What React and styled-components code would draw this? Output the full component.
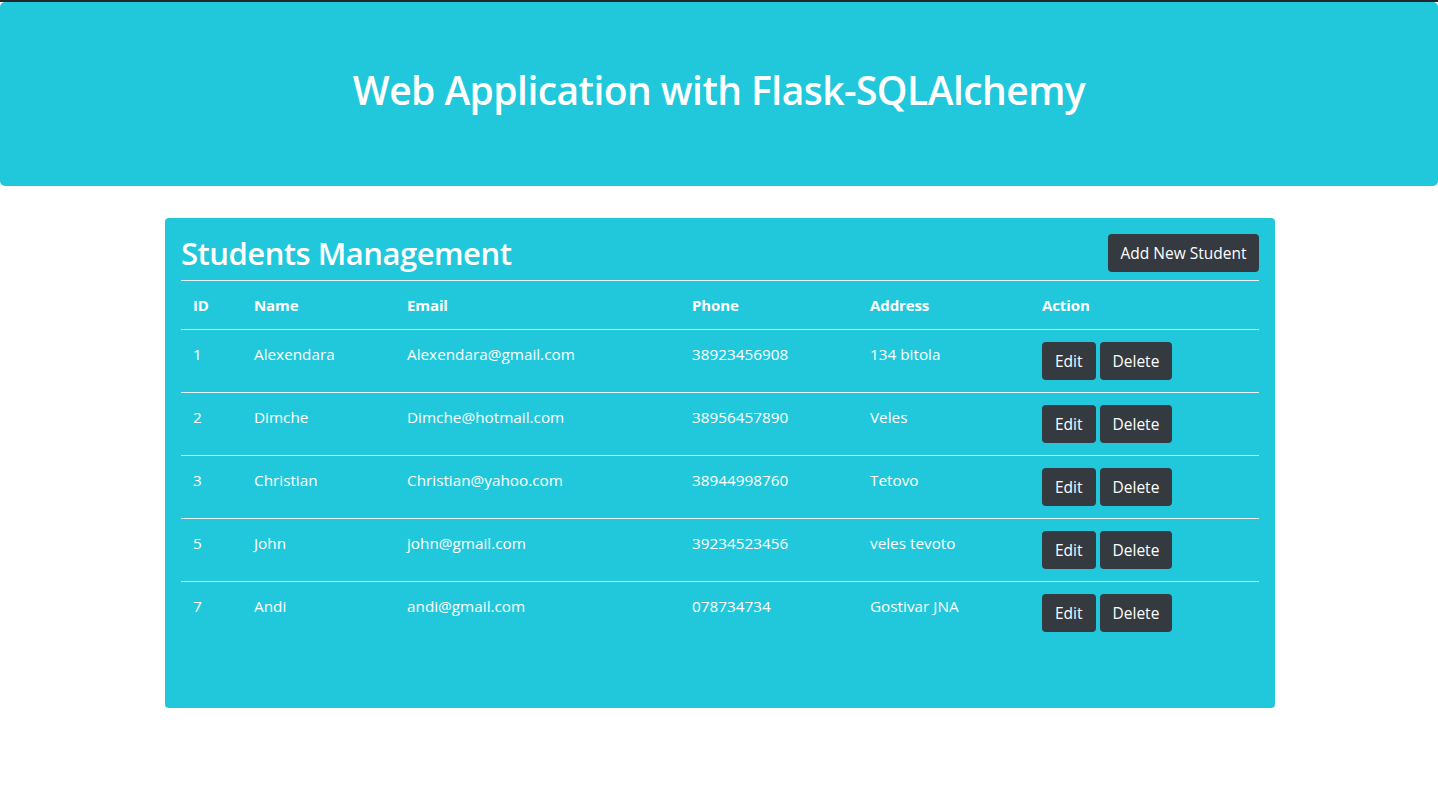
import React from 'react';
import styled, { createGlobalStyle } from 'styled-components';

const GlobalStyle = createGlobalStyle`
  * { box-sizing: border-box; }
  body {
    margin: 0;
    font-family: "Open Sans", "Noto Sans", sans-serif;
    color: #fff;
    background: #fff;
    border-top: 2px solid #22262a;
  }
`;

const Jumbotron = styled.header`
  background: #21c8dc;
  border-radius: 5px;
  padding: 64px 32px 64px;
  text-align: center;
`;

const Title = styled.h1`
  margin: 0 0 8px;
  font-size: 39px;
  font-weight: 600;
  line-height: 48px;
  letter-spacing: -0.55px;
`;

const Container = styled.main`
  width: 1110px;
  margin: 32px auto 0;
  position: relative;
  left: 1px;
`;

const Card = styled.section`
  background: #21c8dc;
  border-radius: 4px;
  padding: 16px 16px 64px;
`;

const CardHead = styled.div`
  display: flex;
  justify-content: space-between;
  align-items: flex-start;
  margin-bottom: 8px;
`;

const Heading = styled.h2`
  margin: 0;
  font-size: 31px;
  font-weight: 600;
  line-height: 38px;
  letter-spacing: -0.5px;
`;

const Button = styled.button`
  background: #343a40;
  color: #fff;
  border: none;
  border-radius: 4px;
  font-family: inherit;
  font-size: 15.5px;
  letter-spacing: 0;
  height: 38px;
  padding: 0 ${p => (p.$wide ? 12.5 : 13)}px;
  margin-right: ${p => (p.$gap ? 4 : 0)}px;
  cursor: pointer;
`;

const Table = styled.table`
  width: 100%;
  border-collapse: collapse;
  table-layout: fixed;
`;

const Th = styled.th`
  text-align: left;
  font-size: 15px;
  font-weight: 700;
  letter-spacing: -0.1px;
  padding: 12px 12px;
  line-height: 24px;
  border-top: 1px solid #e3f5f8;
  width: ${p => p.$w}px;
`;

const Td = styled.td`
  font-size: 15.3px;
  letter-spacing: 0;
  padding: 12px 12px;
  line-height: 24px;
  vertical-align: top;
  border-top: 1px solid #e3f5f8;
  white-space: nowrap;
`;

const students = [
  { id: 1, name: 'Alexendara', email: 'Alexendara@gmail.com', phone: '38923456908', address: '134 bitola' },
  { id: 2, name: 'Dimche', email: 'Dimche@hotmail.com', phone: '38956457890', address: 'Veles' },
  { id: 3, name: 'Christian', email: 'Christian@yahoo.com', phone: '38944998760', address: 'Tetovo' },
  { id: 5, name: 'John', email: 'john@gmail.com', phone: '39234523456', address: 'veles tevoto' },
  { id: 7, name: 'Andi', email: 'andi@gmail.com', phone: '078734734', address: 'Gostivar JNA' },
];

const columns = [
  ['ID', 61],
  ['Name', 153],
  ['Email', 285],
  ['Phone', 178],
  ['Address', 172],
  ['Action', 229],
];

export default function App() {
  return (
    <>
      <GlobalStyle />
      <Jumbotron>
        <Title>Web Application with Flask-SQLAlchemy</Title>
      </Jumbotron>
      <Container>
        <Card>
          <CardHead>
            <Heading>Students Management</Heading>
            <Button $wide>Add New Student</Button>
          </CardHead>
          <Table>
            <thead>
              <tr>
                {columns.map(([label, w]) => (
                  <Th key={label} $w={w}>{label}</Th>
                ))}
              </tr>
            </thead>
            <tbody>
              {students.map(s => (
                <tr key={s.id}>
                  <Td>{s.id}</Td>
                  <Td>{s.name}</Td>
                  <Td>{s.email}</Td>
                  <Td>{s.phone}</Td>
                  <Td>{s.address}</Td>
                  <Td>
                    <Button $gap>Edit</Button>
                    <Button>Delete</Button>
                  </Td>
                </tr>
              ))}
            </tbody>
          </Table>
        </Card>
      </Container>
    </>
  );
}
